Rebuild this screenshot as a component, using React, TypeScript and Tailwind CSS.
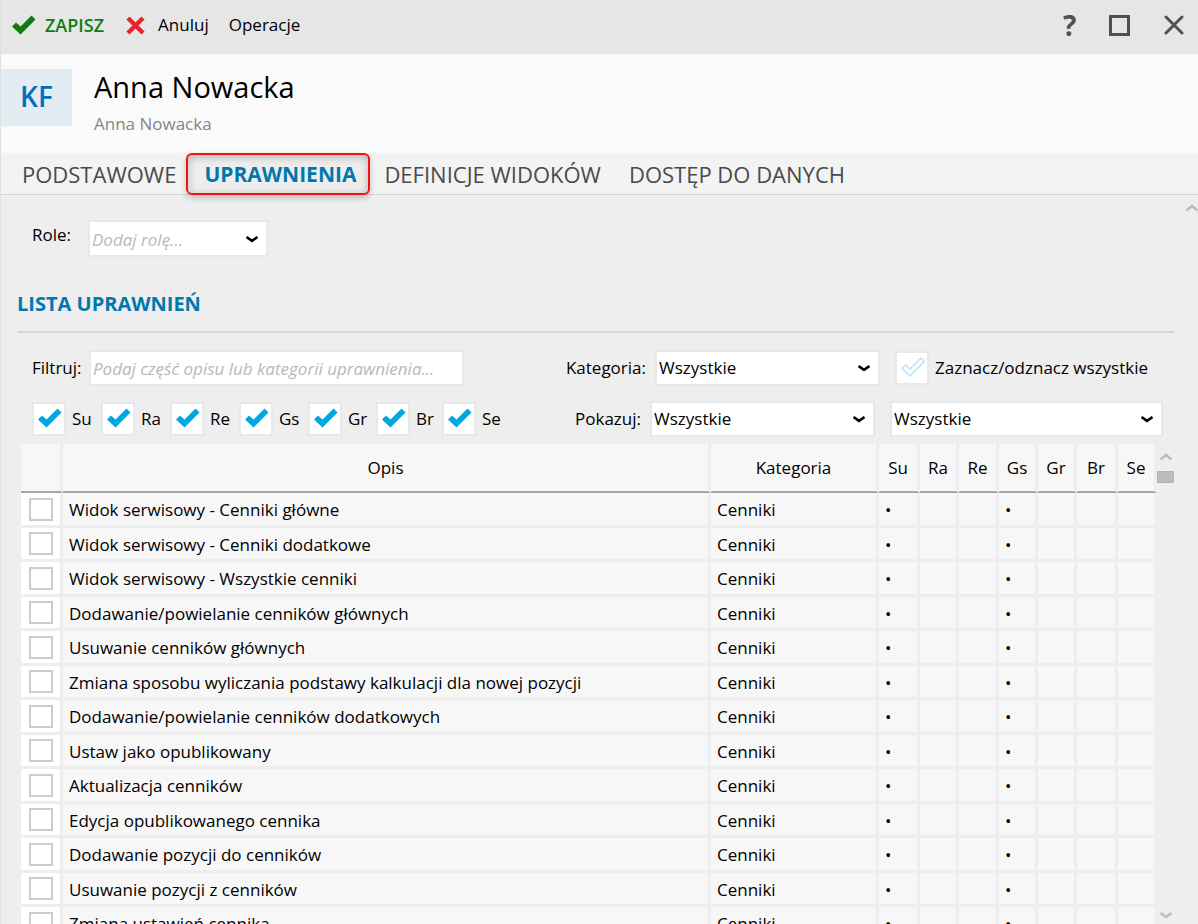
import React, { useState } from 'react';
import clsx from 'clsx';

interface Permission {
  description: string;
  category: string;
  modules: string[];
}

const TABS = ['PODSTAWOWE', 'UPRAWNIENIA', 'DEFINICJE WIDOKÓW', 'DOSTĘP DO DANYCH'];

const MODULES = ['Su', 'Ra', 'Re', 'Gs', 'Gr', 'Br', 'Se'];

const PERMISSIONS: Permission[] = [
  'Widok serwisowy - Cenniki główne',
  'Widok serwisowy - Cenniki dodatkowe',
  'Widok serwisowy - Wszystkie cenniki',
  'Dodawanie/powielanie cenników głównych',
  'Usuwanie cenników głównych',
  'Zmiana sposobu wyliczania podstawy kalkulacji dla nowej pozycji',
  'Dodawanie/powielanie cenników dodatkowych',
  'Ustaw jako opublikowany',
  'Aktualizacja cenników',
  'Edycja opublikowanego cennika',
  'Dodawanie pozycji do cenników',
  'Usuwanie pozycji z cenników',
  'Zmiana ustawień cennika',
].map((description) => ({ description, category: 'Cenniki', modules: ['Su', 'Gs'] }));

const CheckIcon: React.FC<{ className?: string; outline?: boolean }> = ({ className, outline }) => (
  <svg className={className} viewBox="0 0 24 20" fill={outline ? 'none' : 'currentColor'} stroke="currentColor" strokeWidth={outline ? 1.5 : 0}>
    <path d={outline ? 'M1 11.5L4.5 8L9 12L20 1L23.3 4.3L9 19Z' : 'M0 11.5L4 7.5L8.5 11.5L19.5 0.5L23.5 4.5L8.5 19.5Z'} />
  </svg>
);

const Chevron: React.FC<{ className?: string; up?: boolean }> = ({ className, up }) => (
  <svg className={className} viewBox="0 0 12 8" fill="none" stroke="currentColor" strokeWidth={2.6}>
    <path d={up ? 'M0.5 6.5L6 2L11.5 6.5' : 'M0.5 2L6 5.8L11.5 2'} />
  </svg>
);

interface SelectProps {
  id: string;
  options: string[];
  className?: string;
  label?: string;
  placeholder?: boolean;
}

const Select: React.FC<SelectProps> = ({ id, options, className, label, placeholder }) => (
  <div className={clsx('relative', className)}>
    <select
      id={id}
      aria-label={label}
      className={clsx(
        'block h-full w-full appearance-none border-2 border-[#e8e8e8] bg-white pl-[2px] pr-8 outline-none',
        placeholder ? 'pt-[2px] italic text-[#b8b8b8]' : 'text-black'
      )}
    >
      {options.map((option) => (
        <option key={option}>{option}</option>
      ))}
    </select>
    <Chevron className="pointer-events-none absolute right-[10px] top-1/2 h-2 w-3 -translate-y-1/2 text-black" />
  </div>
);

interface CheckProps {
  label: string;
  defaultChecked?: boolean;
}

const Check: React.FC<CheckProps> = ({ label, defaultChecked }) => {
  const [checked, setChecked] = useState(!!defaultChecked);

  return (
    <label className="flex items-center gap-[6px] whitespace-nowrap">
      <span className="relative block size-[34px] shrink-0">
        <input
          type="checkbox"
          checked={checked}
          onChange={(e) => setChecked(e.target.checked)}
          className="block size-full appearance-none border-2 border-[#e8e8e8] bg-white"
        />
        <CheckIcon
          outline={!checked}
          className={clsx(
            'pointer-events-none absolute left-[6px] top-[6px] h-5 w-6',
            checked ? 'text-[#00a8e1]' : 'text-[#b5e5f7]'
          )}
        />
      </span>
      {label}
    </label>
  );
};

const App: React.FC = () => {
  const [activeTab, setActiveTab] = useState('UPRAWNIENIA');

  return (
    <div className="flex h-screen flex-col overflow-hidden border-l border-[#e0e0e0] bg-[#eeeeee] font-['Open_Sans','Noto_Sans',sans-serif] text-[17px] leading-6 text-black">
      {/* Toolbar */}
      <header className="flex h-[54px] shrink-0 items-center bg-[#e6e6e6] pb-1 pl-[11px] pr-[14px]">
        <button className="flex items-center gap-[9px] text-[18px] font-semibold text-[#107c10]">
          <CheckIcon className="h-5 w-6" />
          ZAPISZ
        </button>
        <button className="ml-[22px] flex items-center gap-[13px]">
          <svg className="size-[19px] text-[#e8212b]" viewBox="0 0 19 19" stroke="currentColor" strokeWidth={4.4}>
            <path d="M2 2L17 17M17 2L2 17" />
          </svg>
          Anuluj
        </button>
        <button className="ml-5">Operacje</button>
        <div className="ml-auto flex items-center gap-[34px] text-[#505050]">
          <button className="w-3 text-[28px] font-bold">?</button>
          <button aria-label="Maksymalizuj" className="size-[21px] border-[3px] border-[#505050]" />
          <button aria-label="Zamknij">
            <svg className="size-5" viewBox="0 0 20 20" stroke="currentColor" strokeWidth={3} strokeLinecap="round">
              <path d="M2 2L18 18M18 2L2 18" />
            </svg>
          </button>
        </div>
      </header>

      {/* User */}
      <section className="flex h-[99px] shrink-0 items-start bg-[#fafafa] pt-[15px]">
        <div className="flex h-[57px] w-[71px] items-center justify-center bg-[#e1ecf3] pb-1 text-[28px] font-semibold text-[#0072bc]">
          KF
        </div>
        <div className="ml-[22px]">
          <h1 className="text-[29px] leading-9">Anna Nowacka</h1>
          <p className="mt-[7px] text-[#868686]">Anna Nowacka</p>
        </div>
      </section>

      {/* Tabs */}
      <nav className="flex h-[42px] shrink-0 border-b border-[#d4d4d4] bg-[#f3f3f3] pl-[7px] text-[22px] text-[#4a4a4a]">
        {TABS.map((tab) => (
          <button
            key={tab}
            onClick={() => setActiveTab(tab)}
            className={clsx(
              'relative whitespace-nowrap px-[14px]',
              tab === activeTab && 'bg-[#eeeeee] text-[21px] font-bold text-[#0078ae]'
            )}
          >
            {tab}
            {tab === activeTab && (
              <span className="absolute -bottom-px -left-1 right-0 top-0 rounded-md border-2 border-[#f01414] shadow-[0_3px_6px_rgba(0,0,0,0.2),inset_0_2px_8px_rgba(0,0,0,0.25)]" />
            )}
          </button>
        ))}
      </nav>

      <main className="relative flex min-h-0 flex-1 flex-col pl-4 pr-6">
        <Chevron up className="absolute right-0 top-[9px] h-2 w-3 text-[#bcbcbc]" />

        <div className="flex items-center pl-[15px] pt-[25px]">
          <label htmlFor="role" className="w-14 pb-2">Role:</label>
          <Select id="role" options={['Dodaj rolę...']} placeholder className="h-[37px] w-[180px]" />
        </div>

        <h2 className="mt-[33px] border-b-2 border-[#d6d6d6] pb-[13px] text-[20px] leading-7 font-bold text-[#0078ae]">LISTA UPRAWNIEŃ</h2>

        {/* Filters */}
        <div className="mt-[17px] flex items-center pl-[15px] pr-[11px]">
          <label htmlFor="filter" className="w-[57px]">Filtruj:</label>
          <input
            id="filter"
            type="text"
            placeholder="Podaj część opisu lub kategorii uprawnienia..."
            className="h-9 w-[375px] border-2 border-[#e8e8e8] bg-white pl-[2px] placeholder:italic placeholder:text-[#b8b8b8] focus:outline-none"
          />
          <label htmlFor="category" className="ml-auto pr-[9px]">Kategoria:</label>
          <Select id="category" options={['Wszystkie']} className="h-9 w-[225px]" />
          <div className="ml-[15px] w-[268px]">
            <Check label="Zaznacz/odznacz wszystkie" />
          </div>
        </div>
        <div className="mt-[15px] flex items-center pl-[15px] pr-[11px]">
          <div className="grid grid-cols-[69px_69px_69px_69px_68px_66px_auto]">
            {MODULES.map((name) => (
              <Check key={name} label={name} defaultChecked />
            ))}
          </div>
          <label htmlFor="show" className="ml-auto pr-[9px]">Pokazuj:</label>
          <Select id="show" options={['Wszystkie']} className="h-9 w-[225px]" />
          <Select id="state" label="Stan" options={['Wszystkie']} className="ml-[15px] h-9 w-[273px]" />
        </div>

        {/* Permissions */}
        <div className="mt-[7px] flex min-h-0 flex-1 pl-1">
          <div className="min-w-0 flex-1 overflow-hidden">
            <table className="w-full table-fixed border-separate border-spacing-0">
              <colgroup>
                <col className="w-[42px]" />
                <col />
                <col className="w-[168px]" />
                <col className="w-[41px]" />
                <col className="w-[39px]" />
                <col className="w-10" />
                <col className="w-[39px]" />
                <col className="w-[39px]" />
                <col className="w-[41px]" />
                <col className="w-[39px]" />
              </colgroup>
              <thead>
                <tr className="h-[49px] bg-[#f7f7f7]">
                  {['', 'Opis', 'Kategoria', ...MODULES].map((name) => (
                    <th key={name} className="border-b-2 border-r-[3px] border-b-[#a6a6a6] border-r-[#eeeeee] p-0 font-normal">{name}</th>
                  ))}
                </tr>
              </thead>
              <tbody>
                {PERMISSIONS.map(({ description, category, modules }) => (
                  <tr key={description} className="bg-[#f7f7f7] odd:h-[35px] even:h-[34px]">
                    <td className="border-b-[3px] border-r-[3px] border-[#eeeeee] bg-white p-0">
                      <input
                        type="checkbox"
                        aria-label={description}
                        className="mx-auto block h-[23px] w-6 appearance-none border-2 border-[#cccccc] bg-white checked:bg-[#00a8e1]"
                      />
                    </td>
                    <td className="truncate border-b-[3px] border-r-[3px] border-[#eeeeee] px-[6px] pb-0 pt-[2px]">{description}</td>
                    <td className="border-b-[3px] border-r-[3px] border-[#eeeeee] px-[6px] pb-0 pt-[2px]">{category}</td>
                    {MODULES.map((name) => (
                      <td key={name} className="border-b-[3px] border-r-[3px] border-[#eeeeee] px-[6px] pb-0 pt-[2px]">
                        {modules.includes(name) ? '•' : ''}
                      </td>
                    ))}
                  </tr>
                ))}
              </tbody>
            </table>
          </div>
          <div className="flex w-[17px] shrink-0 flex-col items-center pb-[5px] pt-[9px] text-[#bcbcbc]">
            <Chevron up className="h-2 w-3" />
            <div className="mt-[10px] h-3 w-full border border-[#b4b4b4] bg-[#bcbcbc]" />
            <Chevron className="mt-auto h-2 w-3" />
          </div>
        </div>
      </main>
    </div>
  );
};

export default App;
